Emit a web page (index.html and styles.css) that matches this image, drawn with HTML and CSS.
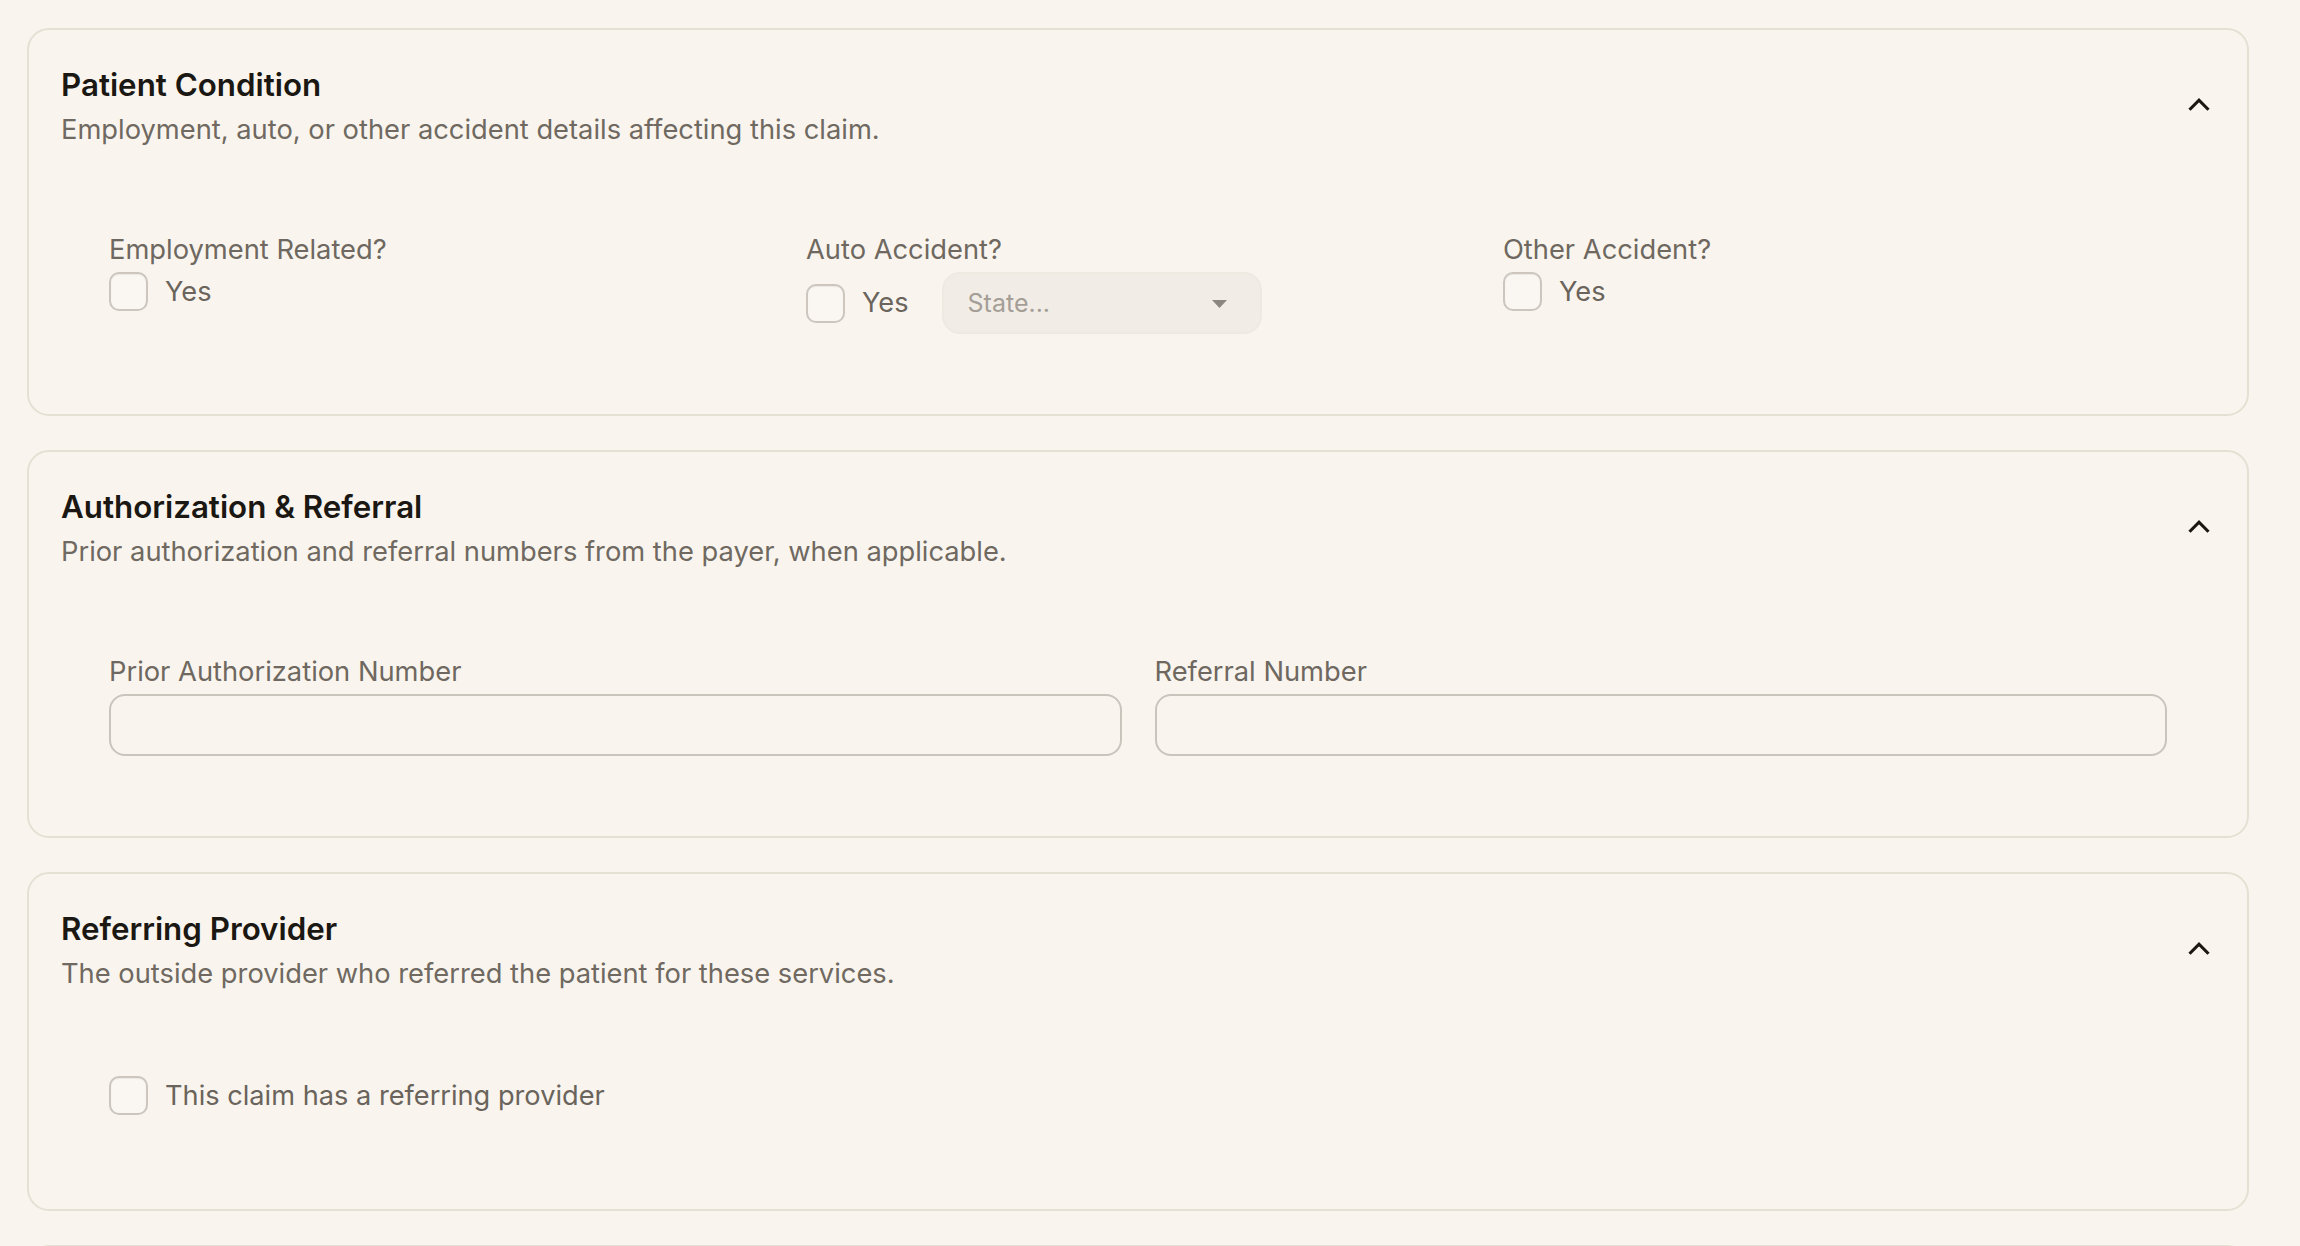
FILE: index.html
```html
<!DOCTYPE html>
<html lang="en">
<head>
    <meta charset="UTF-8">
    <meta name="viewport" content="width=device-width, initial-scale=1.0">
    <title>Claim Details</title>
    <link rel="stylesheet" href="styles.css">
</head>
<body>
    <main class="claim-page">

        <!-- Patient condition -->
        <section class="section-card">
            <div class="section-header">
                <div>
                    <h2 class="section-title">Patient Condition</h2>
                    <p class="section-desc">Employment, auto, or other accident details affecting this claim.</p>
                </div>
                <button type="button" class="toggle-btn" aria-label="Collapse">
                    <svg viewBox="0 0 24 24" width="38" height="38" fill="none" stroke="currentColor" stroke-width="2" stroke-linecap="butt" stroke-linejoin="miter"><path d="m18 15-6-6-6 6"/></svg>
                </button>
            </div>
            <div class="section-body">
                <div class="field-grid three">
                    <div class="field">
                        <span class="field-label">Employment Related?</span>
                        <label class="check-row">
                            <input type="checkbox" class="check" name="employment">
                            <span>Yes</span>
                        </label>
                    </div>
                    <div class="field">
                        <span class="field-label">Auto Accident?</span>
                        <div class="auto-row">
                            <label class="check-row">
                                <input type="checkbox" class="check" name="autoAccident">
                                <span>Yes</span>
                            </label>
                            <div class="select-wrap">
                                <select class="state-select" name="autoState">
                                    <option value="" selected>State...</option>
                                    <option value="CA">CA</option>
                                    <option value="NY">NY</option>
                                    <option value="TX">TX</option>
                                </select>
                                <svg class="select-arrow" viewBox="0 0 15 8" width="15" height="8"><path d="M0 0h15L7.5 8z" fill="currentColor"/></svg>
                            </div>
                        </div>
                    </div>
                    <div class="field">
                        <span class="field-label">Other Accident?</span>
                        <label class="check-row">
                            <input type="checkbox" class="check" name="otherAccident">
                            <span>Yes</span>
                        </label>
                    </div>
                </div>
            </div>
        </section>

        <!-- Authorization -->
        <section class="section-card">
            <div class="section-header">
                <div>
                    <h2 class="section-title">Authorization &amp; Referral</h2>
                    <p class="section-desc">Prior authorization and referral numbers from the payer, when applicable.</p>
                </div>
                <button type="button" class="toggle-btn" aria-label="Collapse">
                    <svg viewBox="0 0 24 24" width="38" height="38" fill="none" stroke="currentColor" stroke-width="2" stroke-linecap="butt" stroke-linejoin="miter"><path d="m18 15-6-6-6 6"/></svg>
                </button>
            </div>
            <div class="section-body">
                <div class="field-grid two">
                    <div class="field">
                        <label class="field-label" for="priorAuth">Prior Authorization Number</label>
                        <input type="text" id="priorAuth" class="text-input">
                    </div>
                    <div class="field">
                        <label class="field-label" for="referralNumber">Referral Number</label>
                        <input type="text" id="referralNumber" class="text-input">
                    </div>
                </div>
            </div>
        </section>

        <!-- Referring provider -->
        <section class="section-card">
            <div class="section-header">
                <div>
                    <h2 class="section-title">Referring Provider</h2>
                    <p class="section-desc">The outside provider who referred the patient for these services.</p>
                </div>
                <button type="button" class="toggle-btn" aria-label="Collapse">
                    <svg viewBox="0 0 24 24" width="38" height="38" fill="none" stroke="currentColor" stroke-width="2" stroke-linecap="butt" stroke-linejoin="miter"><path d="m18 15-6-6-6 6"/></svg>
                </button>
            </div>
            <div class="section-body">
                <label class="check-row single">
                    <input type="checkbox" class="check" name="hasReferring">
                    <span>This claim has a referring provider</span>
                </label>
            </div>
        </section>

        <section class="section-card next-card"></section>

    </main>
</body>
</html>
```

FILE: styles.css
```css
/* Page */
body {
    margin: 0;
    background: #f9f5ee;
    font-family: Inter, "Noto Sans", sans-serif;
    color: #1b1713;
}

.claim-page {
    padding: 28px 51px 0 27px;
}

/* Section cards */
.section-card {
    background: #f9f5ee;
    border: 2px solid #e5e0d4;
    border-radius: 22px;
    padding: 34px 32px;
    margin-bottom: 34px;
}

.section-header {
    display: flex;
    justify-content: space-between;
    align-items: center;
    margin-bottom: 35px;
}

.section-title {
    margin: 0;
    font-size: 31.3px;
    line-height: 42px;
    font-weight: 600;
    color: #1b1713;
}

.section-desc {
    margin: 4px 0 0;
    font-size: 27.3px;
    line-height: 40px;
    color: #6f6961;
}

.toggle-btn {
    background: none;
    border: none;
    padding: 0;
    margin: -5px -3px 0 0;
    color: #1b1713;
    cursor: pointer;
    display: flex;
}

.section-body {
    padding: 47px 48px 46px;
}

/* Fields */
.field-grid {
    display: grid;
    gap: 33px;
}

.field-grid.three {
    grid-template-columns: repeat(3, 1fr);
}

.field-grid.two {
    grid-template-columns: repeat(2, 1fr);
}

.field-label {
    display: block;
    font-size: 27.3px;
    line-height: 36px;
    color: #6e6860;
    margin-bottom: 4px;
}

.check-row {
    display: flex;
    align-items: center;
    gap: 17px;
    font-size: 27.2px;
    line-height: 36px;
    color: #6a645c;
    cursor: pointer;
}

.check-row.single {
    padding-bottom: 14px;
}

.auto-row {
    display: flex;
    align-items: center;
    gap: 33px;
}

.check {
    appearance: none;
    -webkit-appearance: none;
    width: 39px;
    height: 39px;
    margin: 0;
    border: 2px solid #ccc6bf;
    border-radius: 10px;
    background: #faf7f2;
    box-shadow: inset 0 1px 1px rgba(0, 0, 0, 0.06);
    flex-shrink: 0;
}

.select-wrap {
    position: relative;
    width: 320px;
}

.state-select {
    appearance: none;
    -webkit-appearance: none;
    display: block;
    width: 100%;
    height: 62px;
    padding: 0 60px 0 24px;
    font-family: inherit;
    font-size: 25px;
    color: #a49e97;
    background: #f1ede6;
    border: 2px solid #eeeae2;
    border-radius: 18px;
    outline: none;
}

.select-arrow {
    position: absolute;
    right: 35px;
    top: 28px;
    color: #8c8680;
    pointer-events: none;
}

.text-input {
    display: block;
    width: 100%;
    height: 62px;
    box-sizing: border-box;
    border: 2px solid #c9c4bc;
    border-radius: 16px;
    background: transparent;
    font-family: inherit;
    font-size: 27px;
    padding: 0 20px;
    color: #1b1713;
}

.text-input:focus {
    outline: none;
    border-color: #9d978f;
}

.next-card {
    height: 300px;
}
```
